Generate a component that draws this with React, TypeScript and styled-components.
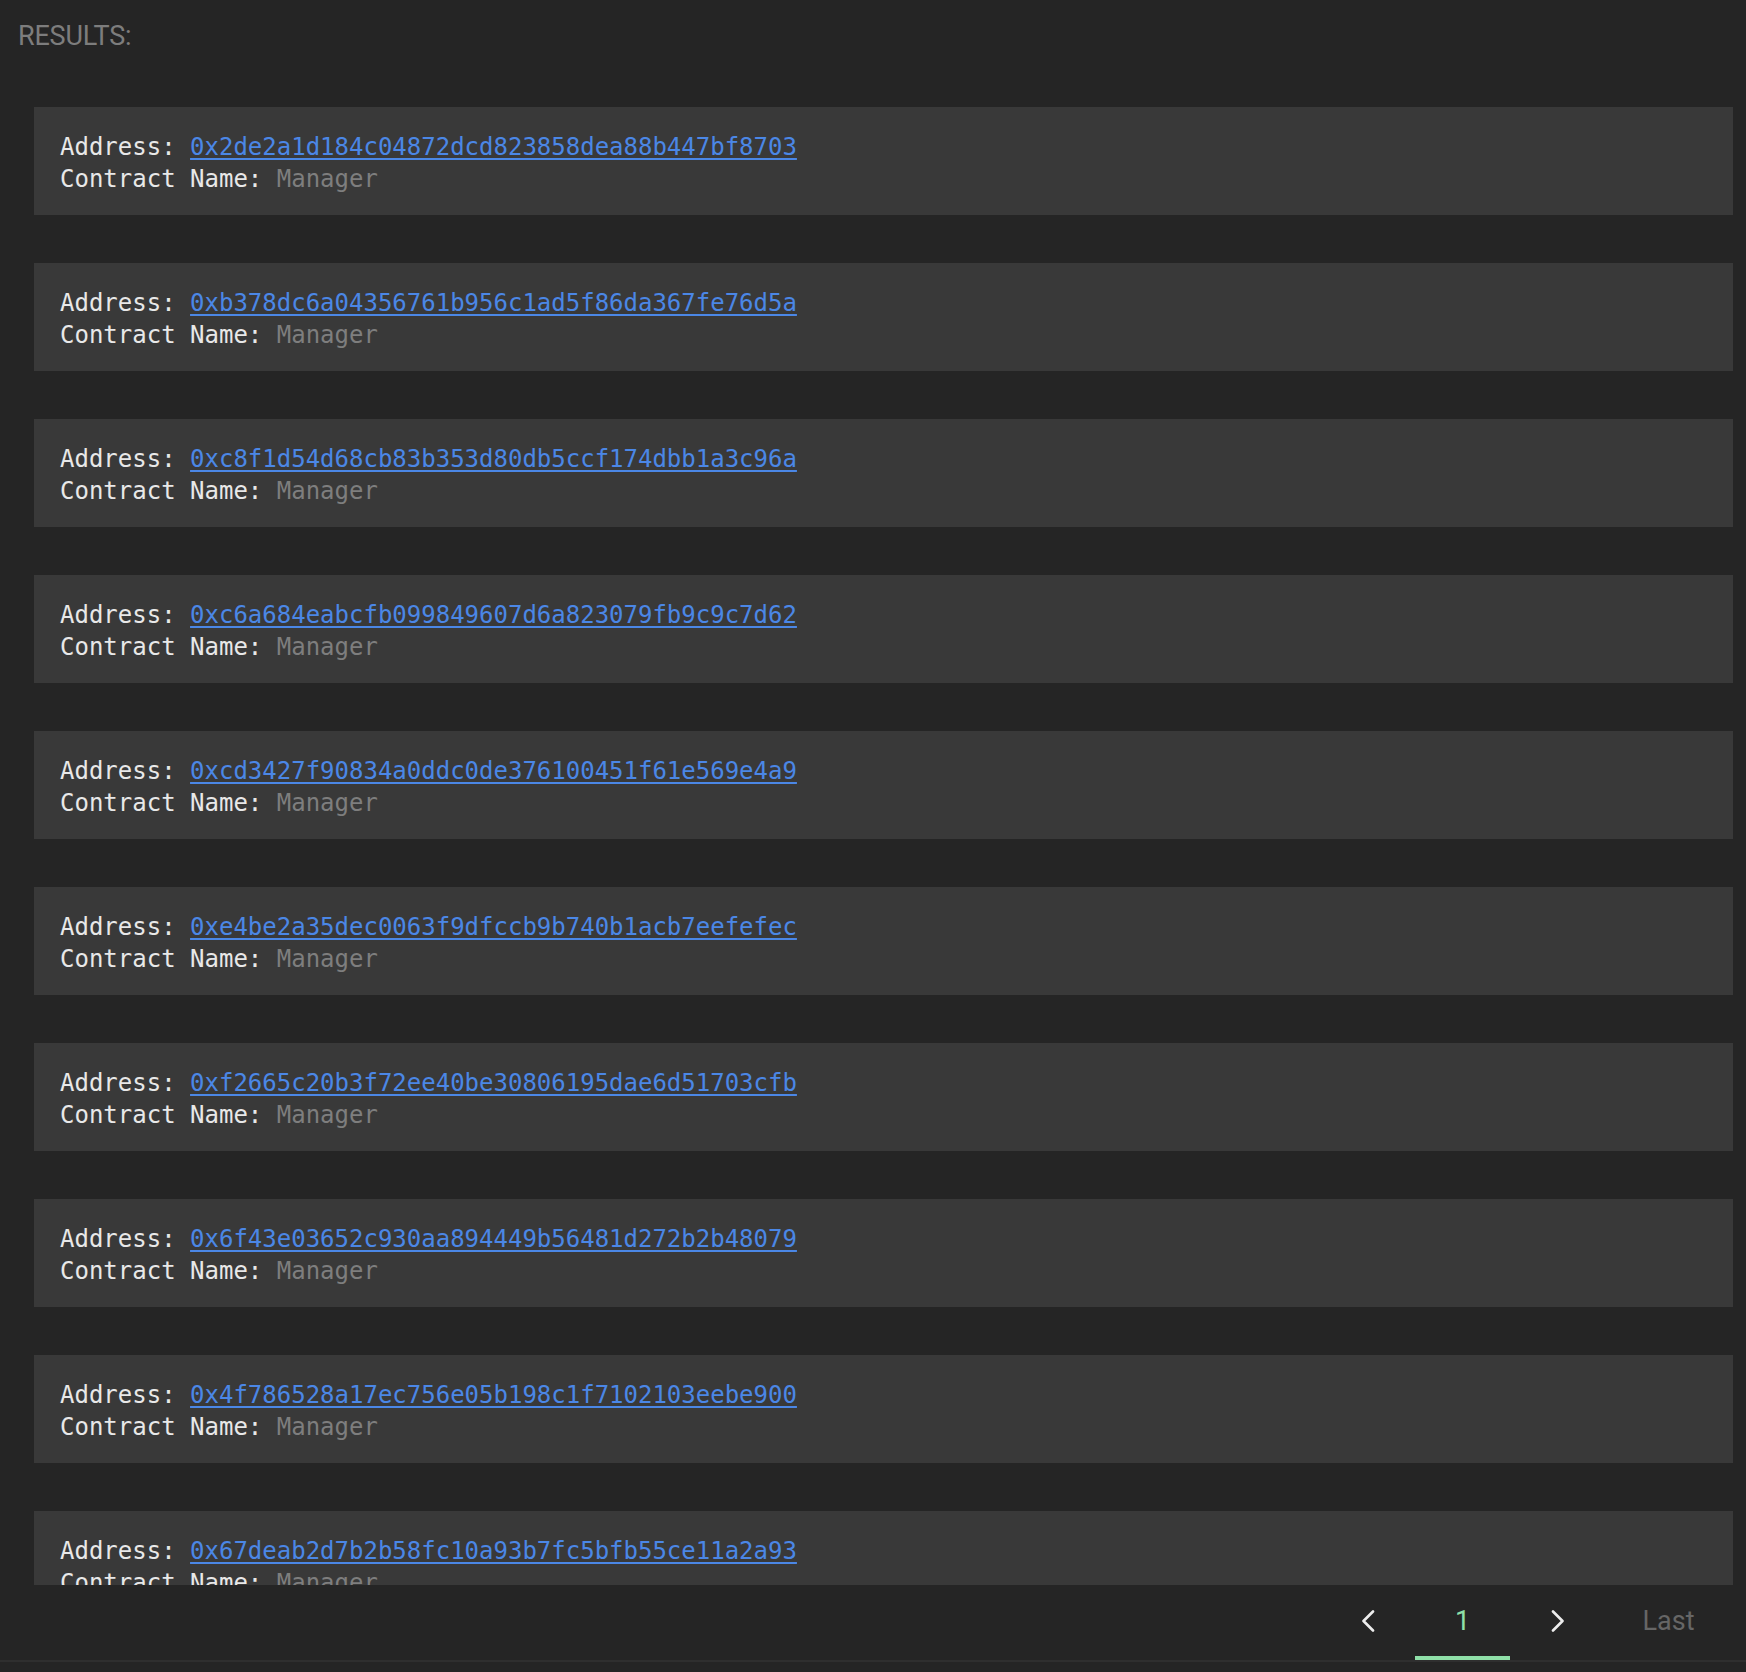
import React from "react";
import styled, { createGlobalStyle } from "styled-components";

const GlobalStyle = createGlobalStyle`
  html, body {
    margin: 0;
    padding: 0;
    background: #252525;
    overflow: hidden;
  }
  * { box-sizing: border-box; }
`;

const Page = styled.div`
  height: 1672px;
  display: flex;
  flex-direction: column;
  background: #252525;
`;

const Title = styled.h2`
  margin: 0;
  padding: 21px 0 0 18px;
  height: 51px;
  font-family: Roboto, "Liberation Sans", sans-serif;
  font-weight: 400;
  font-size: 27px;
  line-height: 30px;
  letter-spacing: -0.2px;
  color: #7d7d7d;
`;

const List = styled.div`
  flex: 1;
  min-height: 0;
  overflow: hidden;
  padding: 56px 13px 0 34px;
  display: flex;
  flex-direction: column;
  gap: 48px;
`;

const Card = styled.div`
  flex: none;
  height: 108px;
  background: #393939;
  padding: 24px 26px 20px;
  font-family: "DejaVu Sans Mono", "Liberation Mono", monospace;
  font-size: 24px;
  line-height: 32px;
  color: #e8e8e8;
  white-space: pre;
`;

const Line = styled.div``;

const Link = styled.a`
  color: #4b87e6;
  text-decoration: underline;
  text-decoration-thickness: 2px;
  text-underline-offset: 3px;
`;

const Muted = styled.span`
  color: #7e7e7e;
`;

const Footer = styled.div`
  flex: none;
  height: 75px;
  display: flex;
  justify-content: flex-end;
  padding-right: 14px;
`;

const PagerCell = styled.div<{ $active?: boolean; $wide?: boolean }>`
  width: ${(p) => (p.$wide ? "127px" : "95px")};
  height: 75px;
  display: flex;
  align-items: center;
  justify-content: center;
  font-family: Roboto, "Liberation Sans", sans-serif;
  font-size: 27px;
  color: ${(p) => (p.$active ? "#8fe0a8" : "#666666")};
  border-bottom: 4px solid ${(p) => (p.$active ? "#8fe0a8" : "transparent")};
  cursor: pointer;
`;

const Separator = styled.div`
  flex: none;
  height: 2px;
  background: #2f2f2f;
`;

const BottomPad = styled.div`
  flex: none;
  height: 10px;
`;

const Chevron = ({ dir }: { dir: "left" | "right" }) => (
  <svg width="14" height="22" viewBox="0 0 14 22" fill="none">
    <polyline
      points={dir === "left" ? "12,1.5 2.5,11 12,20.5" : "2,1.5 11.5,11 2,20.5"}
      stroke="#ededed"
      strokeWidth="2.6"
      strokeLinecap="round"
      strokeLinejoin="round"
    />
  </svg>
);

const addresses = [
  "0x2de2a1d184c04872dcd823858dea88b447bf8703",
  "0xb378dc6a04356761b956c1ad5f86da367fe76d5a",
  "0xc8f1d54d68cb83b353d80db5ccf174dbb1a3c96a",
  "0xc6a684eabcfb099849607d6a823079fb9c9c7d62",
  "0xcd3427f90834a0ddc0de376100451f61e569e4a9",
  "0xe4be2a35dec0063f9dfccb9b740b1acb7eefefec",
  "0xf2665c20b3f72ee40be30806195dae6d51703cfb",
  "0x6f43e03652c930aa894449b56481d272b2b48079",
  "0x4f786528a17ec756e05b198c1f7102103eebe900",
  "0x67deab2d7b2b58fc10a93b7fc5bfb55ce11a2a93",
];

export default function App() {
  return (
    <>
      <GlobalStyle />
      <Page>
        <Title>RESULTS:</Title>
        <List>
          {addresses.map((a) => (
            <Card key={a}>
              <Line>
                {"Address: "}
                <Link href="#">{a}</Link>
              </Line>
              <Line>
                {"Contract Name: "}
                <Muted>Manager</Muted>
              </Line>
            </Card>
          ))}
        </List>
        <Footer>
          <PagerCell>
            <Chevron dir="left" />
          </PagerCell>
          <PagerCell $active>1</PagerCell>
          <PagerCell>
            <Chevron dir="right" />
          </PagerCell>
          <PagerCell $wide>Last</PagerCell>
        </Footer>
        <Separator />
        <BottomPad />
      </Page>
    </>
  );
}
